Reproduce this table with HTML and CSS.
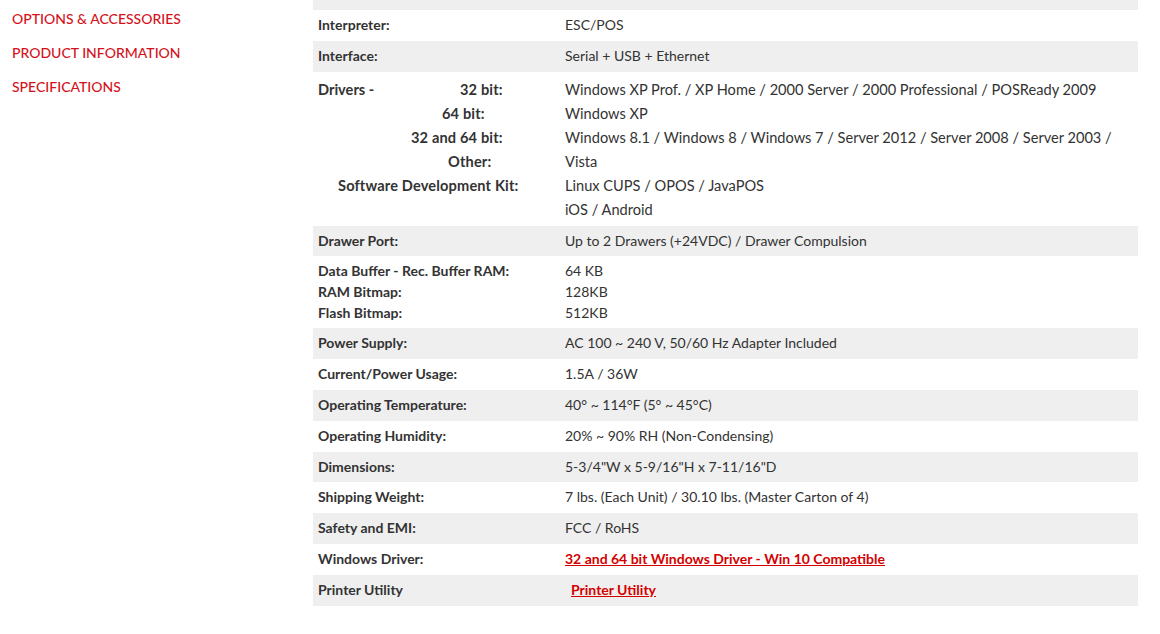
FILE: index.html
```html
<!DOCTYPE html>
<html>
<head>
<meta charset="utf-8">
<link rel="stylesheet" href="styles.css">
</head>
<body>
<div class="page">
  <nav class="sidebar">
    <a href="#" class="nav-link">OPTIONS &amp; ACCESSORIES</a>
    <a href="#" class="nav-link">PRODUCT INFORMATION</a>
    <a href="#" class="nav-link">SPECIFICATIONS</a>
  </nav>
  <main class="main">
    <table class="specs">
      <tr class="row-cut"><td class="label"></td><td class="value"></td></tr>
      <tr><td class="label">Interpreter:</td><td class="value">ESC/POS</td></tr>
      <tr><td class="label">Interface:</td><td class="value">Serial + USB + Ethernet</td></tr>
      <tr class="tall">
        <td class="label">
          <div class="drv-line"><span class="drv-head">Drivers -</span><span class="drv-sub">32 bit:</span></div>
          <div class="drv-line"><span class="drv-sub sub-64">64 bit:</span></div>
          <div class="drv-line"><span class="drv-sub sub-3264">32 and 64 bit:</span></div>
          <div class="drv-line"><span class="drv-sub sub-other">Other:</span></div>
          <div class="drv-line"><span class="drv-sub sub-sdk">Software Development Kit:</span></div>
        </td>
        <td class="value">
          <div class="drv-line">Windows XP Prof. / XP Home / 2000 Server / 2000 Professional / POSReady 2009</div>
          <div class="drv-line">Windows XP</div>
          <div class="drv-line">Windows 8.1 / Windows 8 / Windows 7 / Server 2012 / Server 2008 / Server 2003 /</div>
          <div class="drv-line">Vista</div>
          <div class="drv-line">Linux CUPS / OPOS / JavaPOS</div>
          <div class="drv-line">iOS / Android</div>
        </td>
      </tr>
      <tr><td class="label">Drawer Port:</td><td class="value">Up to 2 Drawers (+24VDC) / Drawer Compulsion</td></tr>
      <tr class="multi">
        <td class="label">Data Buffer - Rec. Buffer RAM:<br>RAM Bitmap:<br>Flash Bitmap:</td>
        <td class="value">64 KB<br>128KB<br>512KB</td>
      </tr>
      <tr><td class="label">Power Supply:</td><td class="value">AC 100 ~ 240 V, 50/60 Hz Adapter Included</td></tr>
      <tr><td class="label">Current/Power Usage:</td><td class="value">1.5A / 36W</td></tr>
      <tr><td class="label">Operating Temperature:</td><td class="value">40° ~ 114°F (5° ~ 45°C)</td></tr>
      <tr><td class="label">Operating Humidity:</td><td class="value">20% ~ 90% RH (Non-Condensing)</td></tr>
      <tr><td class="label">Dimensions:</td><td class="value">5-3/4"W x 5-9/16"H x 7-11/16"D</td></tr>
      <tr><td class="label">Shipping Weight:</td><td class="value">7 lbs. (Each Unit) / 30.10 lbs. (Master Carton of 4)</td></tr>
      <tr><td class="label">Safety and EMI:</td><td class="value">FCC / RoHS</td></tr>
      <tr><td class="label">Windows Driver:</td><td class="value"><a href="#" class="spec-link">32 and 64 bit Windows Driver - Win 10 Compatible</a></td></tr>
      <tr><td class="label">Printer Utility</td><td class="value"><a href="#" class="spec-link util">Printer Utility</a></td></tr>
    </table>
  </main>
</div>
</body>
</html>
```

FILE: styles.css
```css
* { box-sizing: border-box; }
html, body { margin: 0; padding: 0; background: #fff; }
body {
  font-family: Lato, "Open Sans", "Liberation Sans", sans-serif;
  color: #333;
  font-size: 14px;
  overflow: hidden;
}
.page {
  display: flex;
  align-items: flex-start;
}
.sidebar {
  width: 313px;
  flex: none;
  display: flex;
  flex-direction: column;
  gap: 14px;
  padding: 9px 0 0 12px;
}
.nav-link {
  color: #d4121b;
  text-decoration: none;
  font-size: 14px;
  font-weight: 500;
  line-height: 20px;
}
.main {
  width: 825px;
  flex: none;
}
.specs {
  width: 825px;
  border-collapse: collapse;
  table-layout: fixed;
}
.specs tr:nth-child(odd) { background: #efefef; }
.specs td {
  padding: 5px 5px;
  line-height: 20.8px;
  vertical-align: top;
  font-size: 14px;
}
.specs td.label {
  width: 247px;
  font-weight: 700;
  color: #333;
  white-space: nowrap;
}
.specs td.value {
  color: #333;
  white-space: nowrap;
}
.specs tr.row-cut td {
  height: 10px;
  padding: 0;
  line-height: 10px;
}
.specs tr.multi td {
  padding: 4px 5px 5px;
  line-height: 21px;
}
.specs tr.tall td {
  padding: 6px 5px 4px;
  font-size: 14.6px;
}
.specs tr.tall td.label .drv-sub { letter-spacing: 0.15px; }
.drv-line {
  line-height: 24px;
  height: 24px;
  display: flex;
}
.drv-head { width: 142px; flex: none; }
.drv-sub { flex: none; }
.sub-64 { margin-left: 124px; }
.sub-3264 { margin-left: 93px; }
.sub-other { margin-left: 130px; }
.sub-sdk { margin-left: 20px; }
.spec-link {
  color: #d40000;
  font-weight: 700;
  text-decoration: underline;
}
.spec-link.util { margin-left: 6px; }
```
